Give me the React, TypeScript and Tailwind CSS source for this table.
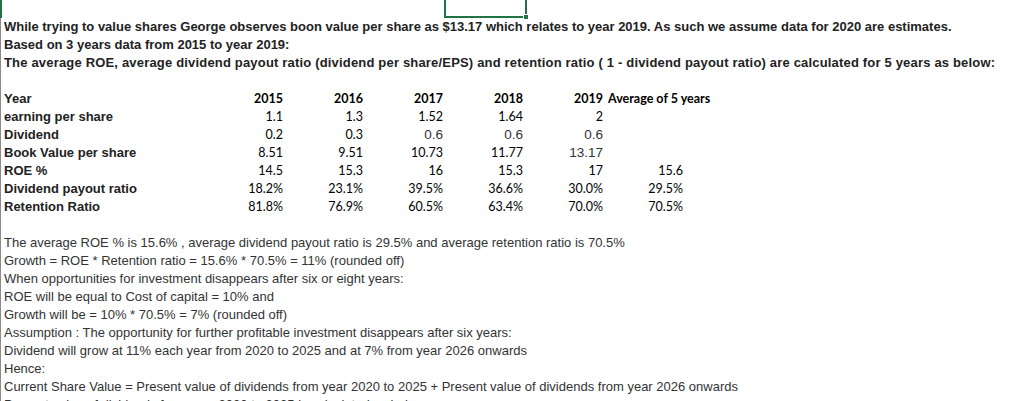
const arial = { fontFamily: '"Liberation Sans", Arial, sans-serif' };

type Cell = { v: string; arial?: boolean };

const rows: { label: string; cells: Cell[]; avg?: string }[] = [
  { label: 'earning per share', cells: [{ v: '1.1' }, { v: '1.3' }, { v: '1.52' }, { v: '1.64' }, { v: '2' }] },
  {
    label: 'Dividend',
    cells: [{ v: '0.2' }, { v: '0.3' }, { v: '0.6', arial: true }, { v: '0.6', arial: true }, { v: '0.6', arial: true }],
  },
  {
    label: 'Book Value per share',
    cells: [{ v: '8.51' }, { v: '9.51' }, { v: '10.73' }, { v: '11.77' }, { v: '13.17', arial: true }],
  },
  { label: 'ROE %', cells: [{ v: '14.5' }, { v: '15.3' }, { v: '16' }, { v: '15.3' }, { v: '17' }], avg: '15.6' },
  {
    label: 'Dividend payout ratio',
    cells: [{ v: '18.2%' }, { v: '23.1%' }, { v: '39.5%' }, { v: '36.6%' }, { v: '30.0%' }],
    avg: '29.5%',
  },
  {
    label: 'Retention Ratio',
    cells: [{ v: '81.8%' }, { v: '76.9%' }, { v: '60.5%' }, { v: '63.4%' }, { v: '70.0%' }],
    avg: '70.5%',
  },
];

const notes = [
  'The average ROE % is 15.6% , average dividend payout ratio is 29.5% and average retention ratio is 70.5%',
  'Growth = ROE * Retention ratio = 15.6% * 70.5% = 11% (rounded off)',
  'When opportunities for investment disappears after six or eight years:',
  'ROE will be equal to Cost of capital = 10% and',
  'Growth will be = 10% * 70.5% = 7% (rounded off)',
  'Assumption : The opportunity for further profitable investment disappears after six years:',
  'Dividend will grow at 11% each year from 2020 to 2025 and at 7% from year 2026 onwards',
  'Hence:',
  'Current Share Value = Present value of dividends from year 2020 to 2025 + Present value of dividends from year 2026 onwards',
  'Present value of dividends from year 2020 to 2025 is calculated as below:',
];

const grid = 'grid grid-cols-[206px_80px_80px_80px_80px_80px_80px] h-[18px] items-center';
const num = "pr-[3px] text-right font-['Lato',sans-serif] text-[12.5px] text-black";

export default function App() {
  return (
    <div className="relative h-[401px] w-[1027px] overflow-hidden bg-white">
      {/* row header edge */}
      <div className="absolute left-0 top-0 h-[18px] w-[2px] bg-[#217346]" />
      <div className="absolute left-0 top-[18px] bottom-0 w-px bg-[#8a8a8a]" />
      {/* selected cell E1 */}
      <div className="absolute left-[444px] top-[-4px] h-[22px] w-[83px] border-2 border-[#217346]">
        <div className="absolute right-[-4px] bottom-[-4px] h-[6px] w-[6px] border border-white bg-[#217346]" />
      </div>

      <div className="pt-[18px] text-[13px] leading-[18px] text-[#222]" style={arial}>
        <div className="pl-1 font-bold whitespace-nowrap">
          <div>
            While trying to value shares George observes boon value per share as $13.17 which relates to year 2019. As such
            we assume data for 2020 are estimates.
          </div>
          <div>Based on 3 years data from 2015 to year 2019:</div>
          <div className="tracking-[0.18px]">
            The average ROE, average dividend payout ratio (dividend per share/EPS) and retention ratio ( 1 - dividend payout
            ratio) are calculated for 5 years as below:
          </div>
          <div className="h-[18px]" />
        </div>

        {/* data table */}
        <div className={grid}>
          <div className="pl-1 font-bold">Year</div>
          {['2015', '2016', '2017', '2018', '2019'].map((y) => (
            <div key={y} className={`${num} font-bold`}>
              {y}
            </div>
          ))}
          <div className="pl-[2px] whitespace-nowrap font-['Lato',sans-serif] text-[12.5px] font-bold text-black">
            Average of 5 years
          </div>
        </div>
        {rows.map((r) => (
          <div key={r.label} className={grid}>
            <div className="pl-1 font-bold whitespace-nowrap">{r.label}</div>
            {r.cells.map((c, i) =>
              c.arial ? (
                <div key={i} className="pr-[3px] text-right text-[13.5px] text-[#333]">
                  {c.v}
                </div>
              ) : (
                <div key={i} className={num}>
                  {c.v}
                </div>
              )
            )}
            <div className={num}>{r.avg}</div>
          </div>
        ))}
        <div className="h-[18px]" />

        <div className="pl-1 whitespace-nowrap text-[#333]">
          {notes.map((n) => (
            <div key={n} className="h-[18px]">
              {n}
            </div>
          ))}
        </div>
      </div>
    </div>
  );
}
